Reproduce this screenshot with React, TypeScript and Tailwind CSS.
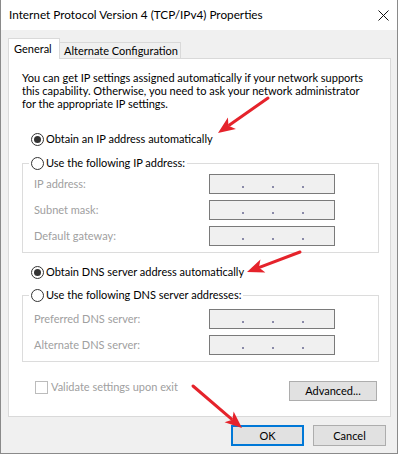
import React from "react";

function Radio({ checked }: { checked?: boolean }) {
  return (
    <span className="flex h-[13px] w-[13px] shrink-0 items-center justify-center rounded-full border border-[#333333] bg-white">
      {checked && <span className="h-[7px] w-[7px] rounded-full bg-[#333333]" />}
    </span>
  );
}

function IpBox() {
  return (
    <div className="flex h-[20px] w-[126px] items-end gap-[28px] border border-[#7a7a7a] bg-[#f0f0f0] pb-[5px] pl-[32px]">
      <span className="h-[2px] w-[2px] bg-[#8a8aa8]" />
      <span className="h-[2px] w-[2px] bg-[#8a8aa8]" />
      <span className="h-[2px] w-[2px] bg-[#8a8aa8]" />
    </div>
  );
}

function FieldRow({ label }: { label: string }) {
  return (
    <div className="flex h-[20px] items-center">
      <span className="w-[175px] text-[#a0a0a0]">{label}</span>
      <IpBox />
    </div>
  );
}

function Arrow({ x1, y1, x2, y2 }: { x1: number; y1: number; x2: number; y2: number }) {
  // arrow head drawn at (x2, y2)
  const a = Math.atan2(y2 - y1, x2 - x1);
  const len = 17;
  const half = 7;
  const bx = x2 - len * Math.cos(a);
  const by = y2 - len * Math.sin(a);
  const px = -Math.sin(a) * half;
  const py = Math.cos(a) * half;
  const pts = `${x2},${y2} ${bx + px},${by + py} ${bx + len * 0.25 * Math.cos(a)},${by + len * 0.25 * Math.sin(a)} ${bx - px},${by - py}`;
  return (
    <g>
      <line x1={x1} y1={y1} x2={bx + 3 * Math.cos(a)} y2={by + 3 * Math.sin(a)} stroke="#e5232b" strokeWidth={3} strokeLinecap="round" />
      <polygon points={pts} fill="#e5232b" />
    </g>
  );
}

export default function App() {
  return (
    <div className="relative h-[455px] w-[400px] bg-white font-['Lato',sans-serif] text-[11px] leading-[16px] text-black">
      <div className="flex h-[454px] w-[398px] flex-col border-x border-b border-[#8a8a8a]">
        {/* title bar */}
        <div className="flex h-[30px] shrink-0 items-center justify-between bg-white pl-[8px] pr-[8px]">
          <span className="text-[11.75px]">Internet Protocol Version 4 (TCP/IPv4) Properties</span>
          <svg width="11" height="11" viewBox="0 0 11 11">
            <path d="M0.5 0.5 L10.5 10.5 M10.5 0.5 L0.5 10.5" stroke="#111" strokeWidth="1" />
          </svg>
        </div>

        <div className="flex flex-1 flex-col bg-[#f0f0f0] px-[7px] pt-[8px]">
          {/* tabs */}
          <div className="flex h-[20px] shrink-0 items-end">
            <div className="relative z-10 mb-[-1px] flex h-[21px] w-[52px] items-center border-x border-t border-[#d9d9d9] bg-white pl-[5px]">
              General
            </div>
            <div className="flex h-[16px] w-[121px] items-center whitespace-nowrap border-r border-t border-[#d9d9d9] bg-[#f0f0f0] pl-[4px]">
              Alternate Configuration
            </div>
          </div>

          {/* panel */}
          <div className="flex h-[359px] w-[383px] shrink-0 flex-col border border-[#d9d9d9] bg-white px-[13px] pt-[12px]">
            <p className="whitespace-nowrap leading-[13px]">
              You can get IP settings assigned automatically if your network supports
              <br />
              this capability. Otherwise, you need to ask your network administrator
              <br />
              for the appropriate IP settings.
            </p>

            <label className="ml-[9px] mt-[21px] flex h-[16px] items-center gap-[2px]">
              <Radio checked />
              Obtain an IP address automatically
            </label>

            <fieldset className="mt-[8px] w-[357px] border border-[#dcdcdc] pb-[6px] pl-[6px]">
              <legend className="px-[2px]">
                <span className="flex h-[16px] items-center gap-[2px]">
                  <Radio />
                  Use the following IP address:
                </span>
              </legend>
              <div className="flex flex-col gap-[6px] pl-[5px] pt-[3px]">
                <FieldRow label="IP address:" />
                <FieldRow label="Subnet mask:" />
                <FieldRow label="Default gateway:" />
              </div>
            </fieldset>

            <label className="ml-[9px] mt-[11px] flex h-[16px] items-center gap-[2px]">
              <Radio checked />
              Obtain DNS server address automatically
            </label>

            <fieldset className="mt-[7px] w-[357px] border border-[#dcdcdc] pb-[6px] pl-[6px]">
              <legend className="px-[2px]">
                <span className="flex h-[16px] items-center gap-[2px]">
                  <Radio />
                  Use the following DNS server addresses:
                </span>
              </legend>
              <div className="flex flex-col gap-[6px] pl-[5px] pt-[6px]">
                <FieldRow label="Preferred DNS server:" />
                <FieldRow label="Alternate DNS server:" />
              </div>
            </fieldset>

            <div className="mt-[19px] flex items-start justify-between">
              <label className="ml-[13px] mt-[-2px] flex h-[16px] items-center gap-[3px] text-[#a0a0a0]">
                <span className="h-[13px] w-[13px] border border-[#bcbcbc] bg-white" />
                Validate settings upon exit
              </label>
              <button className="h-[20px] w-[88px] border border-[#adadad] bg-[#e1e1e1]">Advanced...</button>
            </div>
          </div>

          {/* dialog buttons */}
          <div className="mt-[8px] flex justify-end gap-[9px] pr-[4px]">
            <button className="h-[21px] w-[73px] border-2 border-[#0078d7] bg-[#e1e1e1]">OK</button>
            <button className="h-[21px] w-[73px] border border-[#adadad] bg-[#e1e1e1]">Cancel</button>
          </div>
        </div>
      </div>

      {/* red annotation arrows */}
      <svg className="pointer-events-none absolute left-0 top-0" width="400" height="455">
        <Arrow x1={268} y1={98} x2={218} y2={133} />
        <Arrow x1={300} y1={252} x2={247} y2={272} />
        <Arrow x1={193} y1={386} x2={242} y2={428} />
      </svg>
    </div>
  );
}
